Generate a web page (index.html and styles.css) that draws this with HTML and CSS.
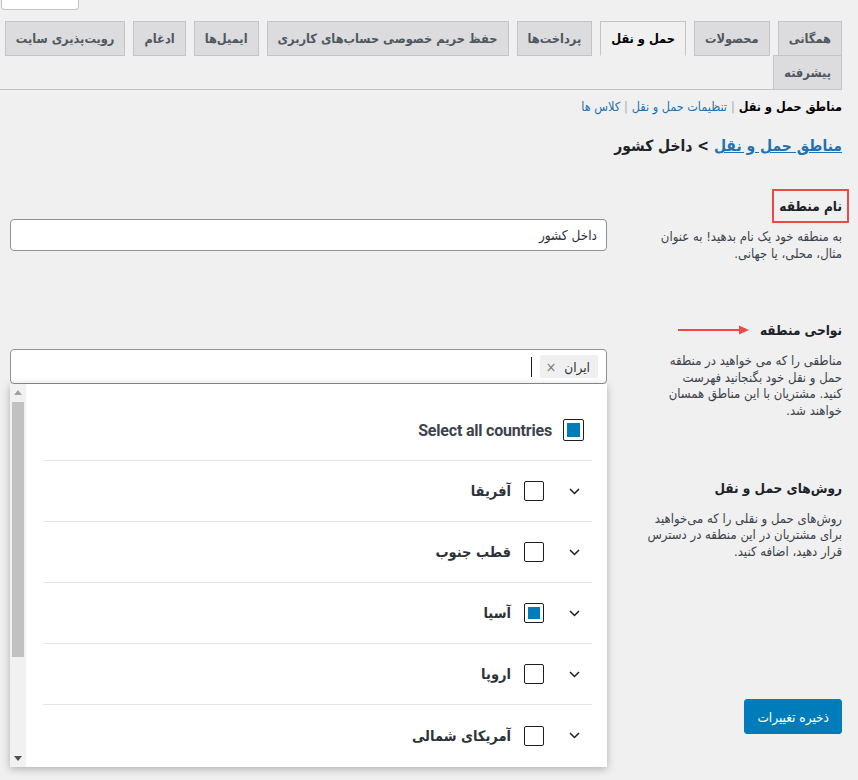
FILE: index.html
```html
<!DOCTYPE html>
<html lang="fa" dir="rtl">
<head>
<meta charset="utf-8">
<title>مناطق حمل و نقل</title>
<link rel="stylesheet" href="styles.css">
</head>
<body>
<div class="help-row"><div class="help-tab"></div></div>
<div class="wrap">
  <nav class="tabs">
    <a class="tab">همگانی</a>
    <a class="tab">محصولات</a>
    <a class="tab tab-active">حمل و نقل</a>
    <a class="tab">پرداخت‌ها</a>
    <a class="tab">حفظ حریم خصوصی حساب‌های کاربری</a>
    <a class="tab">ایمیل‌ها</a>
    <a class="tab">ادغام</a>
    <a class="tab">رویت‌پذیری سایت</a>
    <span class="tab-break"></span>
    <a class="tab">پیشرفته</a>
  </nav>

  <ul class="subnav">
    <li class="subnav-current">مناطق حمل و نقل</li>
    <li class="subnav-sep">|</li>
    <li class="subnav-link">تنظیمات حمل و نقل</li>
    <li class="subnav-sep">|</li>
    <li class="subnav-link">کلاس ها</li>
  </ul>

  <h2 class="title"><a class="title-link">مناطق حمل و نقل</a> &gt; داخل کشور</h2>

  <div class="form">
    <div class="row">
      <div class="th">
        <div class="label"><span class="label-boxed">نام منطقه</span></div>
        <p class="desc">به منطقه خود یک نام بدهید! به عنوان<br>مثال، محلی، یا جهانی.</p>
      </div>
      <div class="td td-name">
        <div class="input">داخل کشور</div>
      </div>
    </div>

    <div class="row">
      <div class="th">
        <div class="label">نواحی منطقه
          <svg class="arrow" width="71" height="10" viewBox="0 0 71 10"><line x1="0" y1="5" x2="63" y2="5" stroke="#f04848" stroke-width="2"/><polygon points="61,0.5 71,5 61,9.5" fill="#f04848"/></svg>
        </div>
        <p class="desc">مناطقی را که می خواهید در منطقه<br>حمل و نقل خود بگنجانید فهرست<br>کنید. مشتریان با این مناطق همسان<br>خواهند شد.</p>
      </div>
      <div class="td td-region">
        <div class="select">
          <span class="token">ایران <span class="token-x">×</span></span>
          <span class="caret"></span>
          <div class="dropdown">
            <div class="list">
              <div class="opt opt-all">
                <span class="check check-on"></span>
                <span class="opt-all-text">Select all countries</span>
              </div>
              <div class="opt">
                <svg class="chev" width="11" height="7" viewBox="0 0 11 7"><path d="M1 1 L5.5 5.5 L10 1" fill="none" stroke="#1e1e1e" stroke-width="1.5"/></svg>
                <span class="check"></span>
                <span class="opt-text">آفریقا</span>
              </div>
              <div class="opt">
                <svg class="chev" width="11" height="7" viewBox="0 0 11 7"><path d="M1 1 L5.5 5.5 L10 1" fill="none" stroke="#1e1e1e" stroke-width="1.5"/></svg>
                <span class="check"></span>
                <span class="opt-text">قطب جنوب</span>
              </div>
              <div class="opt">
                <svg class="chev" width="11" height="7" viewBox="0 0 11 7"><path d="M1 1 L5.5 5.5 L10 1" fill="none" stroke="#1e1e1e" stroke-width="1.5"/></svg>
                <span class="check check-on"></span>
                <span class="opt-text">آسیا</span>
              </div>
              <div class="opt">
                <svg class="chev" width="11" height="7" viewBox="0 0 11 7"><path d="M1 1 L5.5 5.5 L10 1" fill="none" stroke="#1e1e1e" stroke-width="1.5"/></svg>
                <span class="check"></span>
                <span class="opt-text">اروپا</span>
              </div>
              <div class="opt opt-last">
                <svg class="chev" width="11" height="7" viewBox="0 0 11 7"><path d="M1 1 L5.5 5.5 L10 1" fill="none" stroke="#1e1e1e" stroke-width="1.5"/></svg>
                <span class="check"></span>
                <span class="opt-text">آمریکای شمالی</span>
              </div>
            </div>
            <div class="scrollbar">
              <svg class="sb-arrow" width="8" height="5" viewBox="0 0 8 5"><polygon points="0,5 4,0 8,5" fill="#a3a3a3"/></svg>
              <div class="sb-track"><div class="sb-thumb"></div></div>
              <svg class="sb-arrow" width="8" height="5" viewBox="0 0 8 5"><polygon points="0,0 8,0 4,5" fill="#505050"/></svg>
            </div>
          </div>
        </div>
      </div>
    </div>

    <div class="row">
      <div class="th">
        <div class="label">روش‌های حمل و نقل</div>
        <p class="desc">روش‌های حمل و نقلی را که می‌خواهید<br>برای مشتریان در این منطقه در دسترس<br>قرار دهید، اضافه کنید.</p>
      </div>
      <div class="td"></div>
    </div>
  </div>

  <div class="actions"><button class="btn-primary">ذخیره تغییرات</button></div>
</div>
</body>
</html>
```
FILE: styles.css
```css
* { box-sizing: border-box; }

html, body { min-height: 100%; }

body {
  margin: 0;
  background: #f0f0f1;
  direction: rtl;
  font-family: "DejaVu Sans Condensed", "DejaVu Sans", sans-serif;
  font-stretch: condensed;
  font-size: 13px;
  color: #3c434a;
}

.help-row {
  display: flex;
  justify-content: flex-end;
  padding-left: 1px;
  height: 10px;
}
.help-tab {
  width: 78px;
  height: 10px;
  background: #fff;
  border: 1px solid #c3c4c7;
  border-top: 0;
  border-radius: 0 0 4px 4px;
}

.wrap {
  margin-right: 16px;
  padding-bottom: 45px;
}

.tabs {
  display: flex;
  flex-wrap: wrap;
  column-gap: 8px;
  padding-top: 11px;
  border-bottom: 1px solid #c3c4c7;
}
.tab-break {
  flex-basis: 100%;
  height: 0;
}
.tab {
  display: block;
  padding: 5px 10px;
  font-size: 12.7px;
  line-height: 23px;
  font-weight: 700;
  color: #50575e;
  background: #dcdcde;
  border: 1px solid #c3c4c7;
  margin-bottom: -1px;
  white-space: nowrap;
}
.tab-active {
  background: #f0f0f1;
  color: #000;
  border-bottom-color: #f0f0f1;
}

.subnav {
  list-style: none;
  margin: 7px 0 0;
  padding: 0;
  display: flex;
  gap: 4px;
  font-size: 12.5px;
  line-height: 20px;
}
.subnav-current { color: #000; font-weight: 700; }
.subnav-link { color: #2271b1; }
.subnav-sep { color: #a7aaad; }

.title {
  margin: 17px 0 0;
  font-size: 15.5px;
  line-height: 24px;
  font-weight: 700;
  color: #1d2327;
}
.title-link {
  color: #2271b1;
  text-decoration: underline;
}

.form { margin-top: 9px; }

.row {
  display: flex;
  align-items: flex-start;
  padding: 29px 0;
}
.th {
  width: 200px;
  flex: none;
}
.td {
  flex: 1;
  padding: 0 35px 0 10px;
}
.td-name { padding-top: 23px; }
.td-region { padding-top: 29px; }

.label {
  display: flex;
  align-items: center;
  gap: 11px;
  font-size: 13.5px;
  line-height: 20px;
  font-weight: 700;
  color: #1d2327;
  white-space: nowrap;
}
.label-boxed {
  outline: 2px solid #f04848;
  outline-offset: 5px;
}
.arrow { display: block; }

.desc {
  margin: 13px 0 0;
  font-size: 13px;
  line-height: 16.6px;
  color: #3c434a;
  white-space: nowrap;
}

.input {
  height: 32px;
  background: #fff;
  border: 1px solid #8c8f94;
  border-radius: 4px;
  padding: 0 9px;
  font-size: 13.5px;
  line-height: 30px;
  color: #2c3338;
}

.select {
  position: relative;
  display: flex;
  align-items: center;
  gap: 8px;
  height: 35px;
  background: #fff;
  border: 1px solid #8c8f94;
  border-radius: 4px;
  padding: 0 8px;
}
.token {
  display: flex;
  align-items: center;
  gap: 8px;
  height: 23px;
  padding: 0 8px 0 6px;
  background: #f0f0f1;
  border-radius: 2px;
  font-size: 13.5px;
  color: #2c3338;
}
.token-x { color: #757575; font-size: 14px; }
.caret {
  width: 1px;
  height: 20px;
  background: #1e1e1e;
}

.dropdown {
  position: absolute;
  top: 34px;
  right: -1px;
  left: -1px;
  height: 383px;
  background: #fff;
  box-shadow: 0 2px 8px rgba(0, 0, 0, 0.28);
  display: flex;
  overflow: hidden;
}
.list {
  flex: 1;
  padding: 0 15px 0 17px;
}
.opt {
  display: flex;
  align-items: center;
  height: 61px;
  border-bottom: 1px solid #e4e4e4;
  padding-right: 12px;
}
.opt-last { border-bottom: 0; }
.opt-all {
  height: 77px;
  padding-top: 16px;
  padding-right: 8px;
  gap: 11px;
}
.chev { display: block; flex: none; }
.check {
  flex: none;
  width: 20px;
  height: 20px;
  border: 1px solid #1e1e1e;
  border-radius: 2px;
  background: #fff;
  padding: 3px;
}
.opt .check { margin-right: 25px; }
.opt-all .check { margin-right: 0; width: 21px; height: 22px; }
.check-on::after {
  content: "";
  display: block;
  width: 100%;
  height: 100%;
  background: #007cba;
}
.opt-text {
  margin-right: 13px;
  font-size: 14.5px;
  font-weight: 700;
  color: #2c3338;
}
.opt-all-text {
  direction: ltr;
  font-family: Roboto, "Liberation Sans", sans-serif;
  font-stretch: normal;
  font-size: 16px;
  font-weight: 700;
  color: #3c434a;
  letter-spacing: -0.2px;
}

.scrollbar {
  width: 16px;
  flex: none;
  background: #f1f1f1;
  display: flex;
  flex-direction: column;
  align-items: center;
  padding: 6px 0 6px;
}
.sb-arrow { display: block; flex: none; }
.sb-track {
  flex: 1;
  width: 100%;
  padding: 7px 2px 0;
}
.sb-thumb {
  height: 255px;
  background: #c1c1c1;
}

.actions {
  display: flex;
  margin-top: 110px;
}
.btn-primary {
  height: 35px;
  padding: 0 12px;
  background: #007cba;
  border: 1px solid #007cba;
  border-radius: 3px;
  color: #fff;
  font-family: "DejaVu Sans Condensed", "DejaVu Sans", sans-serif;
  font-stretch: condensed;
  font-size: 13.5px;
  font-weight: 400;
}
```
